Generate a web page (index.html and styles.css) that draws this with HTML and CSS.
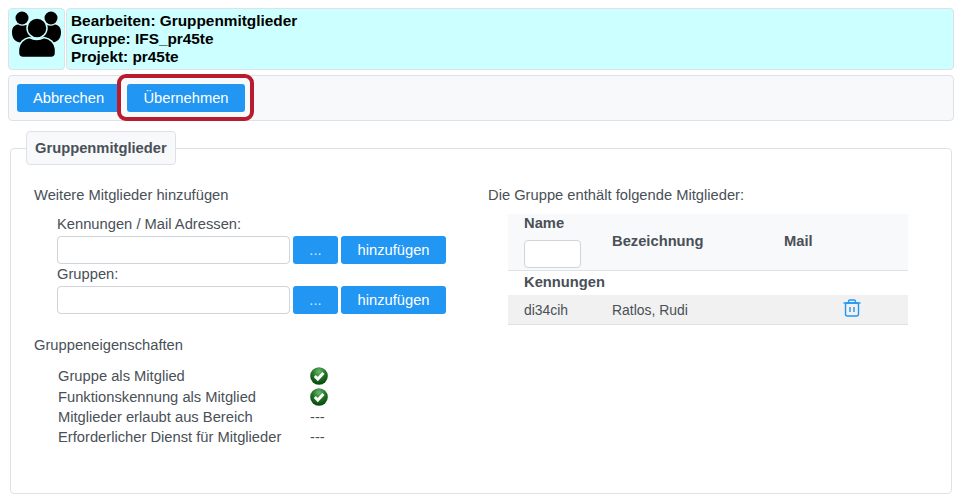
FILE: index.html
```html
<!DOCTYPE html>
<html lang="de">
<head>
<meta charset="utf-8">
<title>Bearbeiten: Gruppenmitglieder</title>
<link rel="stylesheet" href="styles.css">
</head>
<body>
<header class="head">
  <div class="head-icon">
    <svg width="52" height="50" viewBox="0 0 52 50" aria-hidden="true">
      <circle cx="11" cy="7" r="6.500"/>
      <circle cx="40" cy="7" r="6.500"/>
      <path d="M1 21c0-4.500 2.500-7 6-7.500 2.500 1.500 5.500 1.500 8 .5h6v12l-9 6c-1.500 0-2.500-.3-4-.8C3.500 30 1 27 1 21z"/>
      <path d="M50 21c0-4.500-2.500-7-6-7.500-2.500 1.500-5.500 1.500-8 .5h-6v12l9 6c1.500 0 2.500-.3 4-.8C47.500 30 50 27 50 21z"/>
      <circle class="ring" cx="26" cy="17" r="10"/>
      <path class="ring" d="M18.500 26.500c4.500 2.500 10 2.500 14.500 0 6.500 1 11 5.500 11.500 11.500v4c0 2.800-1.700 4.500-4.500 4.500H12c-2.800 0-4.500-1.700-4.500-4.500v-4c.5-6 5-10.500 11-11.500z"/>
    </svg>
  </div>
  <div class="head-title">
    <div>Bearbeiten: Gruppenmitglieder</div>
    <div>Gruppe: IFS_pr45te</div>
    <div>Projekt: pr45te</div>
  </div>
</header>

<nav class="toolbar">
  <button class="btn btn-cancel" type="button">Abbrechen</button>
  <div class="highlighted">
    <button class="btn btn-apply" type="button">Übernehmen</button>
    <span class="marker"></span>
  </div>
</nav>

<fieldset class="group">
  <legend>Gruppenmitglieder</legend>
  <div class="columns">
    <section class="col-left">
      <div class="sec-title">Weitere Mitglieder hinzufügen</div>
      <div class="adders">
        <label class="add-label">Kennungen / Mail Adressen:</label>
        <div class="add-row">
          <input class="add-input" type="text">
          <button class="btn btn-dots" type="button">...</button>
          <button class="btn btn-add" type="button">hinzufügen</button>
        </div>
        <label class="add-label">Gruppen:</label>
        <div class="add-row">
          <input class="add-input" type="text">
          <button class="btn btn-dots" type="button">...</button>
          <button class="btn btn-add" type="button">hinzufügen</button>
        </div>
      </div>
      <div class="sec-title props-title">Gruppeneigenschaften</div>
      <dl class="props">
        <dt class="p1">Gruppe als Mitglied</dt>
        <dd class="p1">
          <svg class="ok" width="18" height="18" viewBox="0 0 18 18" aria-hidden="true">
            <defs>
              <radialGradient id="g1" cx="50%" cy="25%" r="75%"><stop offset="0" stop-color="#6db86d"/><stop offset=".5" stop-color="#1f7524"/><stop offset="1" stop-color="#07450c"/></radialGradient>
            </defs>
            <circle cx="9" cy="9" r="8.800" fill="url(#g1)"/>
            <path d="M4.800 9l3 3 5.600-6" fill="none" stroke="#fff" stroke-width="3"/>
          </svg>
        </dd>
        <dt class="p3">Funktionskennung als Mitglied</dt>
        <dd class="p3">
          <svg class="ok" width="18" height="18" viewBox="0 0 18 18" aria-hidden="true">
            <circle cx="9" cy="9" r="8.800" fill="url(#g1)"/>
            <path d="M4.800 9l3 3 5.600-6" fill="none" stroke="#fff" stroke-width="3"/>
          </svg>
        </dd>
        <dt class="p3">Mitglieder erlaubt aus Bereich</dt>
        <dd class="p3">---</dd>
        <dt class="p3">Erforderlicher Dienst für Mitglieder</dt>
        <dd class="p3">---</dd>
      </dl>
    </section>
    <section class="col-right">
      <div class="sec-title">Die Gruppe enthält folgende Mitglieder:</div>
      <table class="members">
        <thead>
          <tr>
            <th class="c-name"><div>Name</div><input class="filter" type="text"></th>
            <th class="c-desc">Bezeichnung</th>
            <th class="c-mail">Mail</th>
            <th class="c-act"></th>
          </tr>
        </thead>
        <tbody>
          <tr class="group-row"><td colspan="4">Kennungen</td></tr>
          <tr class="data-row">
            <td>di34cih</td>
            <td>Ratlos, Rudi</td>
            <td></td>
            <td>
              <svg class="trash" width="18" height="18" viewBox="0 0 18 18" fill="none" stroke="#2196f3" stroke-width="1.400" aria-hidden="true">
                <path d="M.5 4h17M5.500 4V2.500C5.500 1.500 6 1 7 1h4c1 0 1.500.5 1.500 1.500V4"/>
                <rect x="2.500" y="4" width="13" height="13" rx="2"/>
                <path d="M7 8v5M11 8v5"/>
              </svg>
            </td>
          </tr>
        </tbody>
      </table>
    </section>
  </div>
</fieldset>
</body>
</html>
```
FILE: styles.css
```css
* { box-sizing: border-box; }
html, body { height: 100%; }
body {
  margin: 0;
  padding: 8px 10px 0 8px;
  background: #fff;
  color: #495057;
  font-family: "Liberation Sans", Arial, sans-serif;
  font-size: 14.72px;
  line-height: 20px;
  overflow: hidden;
}
.head { display: flex; gap: 1px; height: 62px; }
.head-icon, .head-title {
  background: #ccffff;
  border: 1px solid #dee2e6;
  border-radius: 4px;
}
.head-icon { width: 57px; padding: 2px 0 0 2px; flex: none; }
.head-icon svg { display: block; fill: #000; }
.ring { stroke: #ccffff; stroke-width: 1.500; }
.head-title {
  flex: 1;
  padding: 3px 4px;
  color: #000;
  font-weight: 700;
  font-size: 15.36px;
  line-height: 17.8px;
}
.toolbar {
  display: flex;
  gap: 7px;
  height: 46px;
  margin-top: 5px;
  padding: 8px;
  background: #f8f9fa;
  border: 1px solid #dee2e6;
  border-radius: 4px;
}
.btn {
  display: block;
  height: 28px;
  padding: 0 0 1px;
  border: 0;
  border-radius: 3px;
  background: #2196f3;
  color: #fff;
  font: 14.72px/20px "Liberation Sans", Arial, sans-serif;
}
.btn-cancel { width: 103px; }
.btn-apply { width: 118px; }
.btn-dots { width: 45px; color: #cfe8fc; }
.btn-add { width: 105px; }
.highlighted { position: relative; }
.marker {
  position: absolute;
  left: -10px;
  top: -10px;
  width: 137px;
  height: 47px;
  border: 4px solid #b81c2e;
  border-radius: 9px;
}
.group {
  margin: 10px 2px 0 2px;
  padding: 0;
  height: 363px;
  border: 1px solid #dee2e6;
  border-radius: 4px;
  min-width: 0;
}
.group legend {
  margin-left: 15px;
  padding: 0 8px;
  width: 150px;
  height: 34px;
  line-height: 32px;
  background: #f8f9fa;
  border: 1px solid #dee2e6;
  border-radius: 4px;
  font-weight: 700;
  white-space: nowrap;
}
.columns { display: flex; padding: 20px 0 0 23px; }
.col-left { width: 454px; flex: none; }
.col-right { flex: 1; }
.sec-title { height: 20px; }
.adders { padding: 9px 0 0 23px; }
.add-label { display: block; height: 22px; line-height: 20px; }
.add-row { display: flex; gap: 3px; height: 28px; }
.add-input {
  width: 233px;
  height: 28px;
  margin: 0;
  border: 1px solid #ced4da;
  border-radius: 4px;
  background: #fff;
}
.props-title { margin-top: 21px; }
.props {
  display: grid;
  grid-template-columns: 252px auto;
  margin: 11px 0 0 24px;
  justify-content: start;
}
.props dt, .props dd { margin: 0; font-weight: 400; }
.props .p1 { height: 21px; }
.props .p3 { height: 20px; }
.ok { display: block; margin-top: 1px; }
.members {
  margin: 9px 0 0 20px;
  width: 400px;
  border-collapse: collapse;
  table-layout: fixed;
}
.members thead tr {
  background: #f8f9fa;
  border-bottom: 1px solid #dee2e6;
  height: 56px;
}
.members th { padding: 0; text-align: left; font-weight: 700; vertical-align: middle; }
.members th.c-name { width: 104px; padding-left: 16px; }
.members th.c-desc { width: 172px; padding-bottom: 2px; }
.members th.c-mail { width: 60px; padding-bottom: 2px; }
.c-name div { height: 19px; margin-top: -1px; }
.filter {
  display: block;
  width: 57px;
  height: 28px;
  margin: 8px 0 2px;
  border: 1px solid #ced4da;
  border-radius: 4px;
  background: #fff;
}
.group-row td { height: 24px; padding: 0 0 1px 16px; font-weight: 700; }
.data-row { height: 30px; background: #f1f1f1; border-bottom: 1px solid #dee2e6; font-size: 13.92px; }
.data-row td { padding: 1px 0 0; }
.data-row td:first-child { padding-left: 16px; }
.trash { display: block; margin: -3px 0 0 -1px; }
```
